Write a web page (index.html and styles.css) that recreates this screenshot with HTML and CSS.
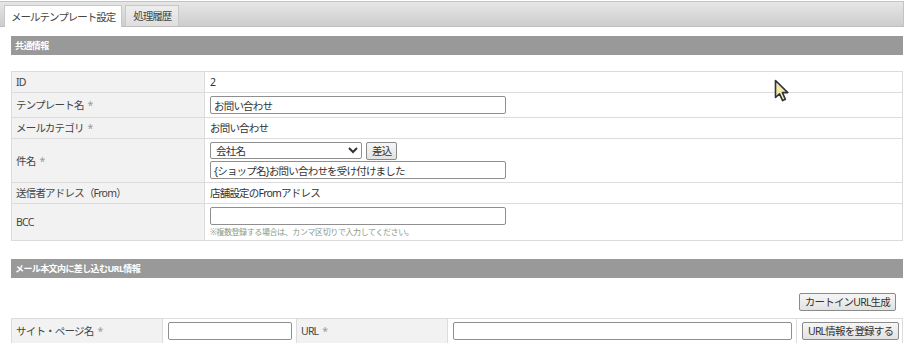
FILE: index.html
```html
<!DOCTYPE html>
<html lang="ja">
  <head>
    <meta charset="UTF-8" />
    <title>メールテンプレート設定</title>
    <link rel="stylesheet" href="styles.css">
  </head>
  <body>
    <!-- Tabs -->
    <div class="tabs">
      <div class="tab active">メールテンプレート設定</div>
      <div class="tab">処理履歴</div>
    </div>

    <div class="content">
      <h2 class="section-title">共通情報</h2>

      <table class="form-table">
        <tr>
          <th>ID</th>
          <td>2</td>
        </tr>
        <tr>
          <th>テンプレート名<span class="req">*</span></th>
          <td><input type="text" class="text-wide" value="お問い合わせ" /></td>
        </tr>
        <tr>
          <th>メールカテゴリ<span class="req">*</span></th>
          <td>お問い合わせ</td>
        </tr>
        <tr>
          <th>件名<span class="req">*</span></th>
          <td>
            <div class="insert-row">
              <select class="insert-select">
                <option>会社名</option>
              </select>
              <button class="btn">差込</button>
            </div>
            <input type="text" class="text-wide" value="{ショップ名}お問い合わせを受け付けました" />
          </td>
        </tr>
        <tr>
          <th>送信者アドレス（From）</th>
          <td>店舗設定のFromアドレス</td>
        </tr>
        <tr>
          <th>BCC</th>
          <td>
            <input type="text" class="text-wide" />
            <p class="note">※複数登録する場合は、カンマ区切りで入力してください。</p>
          </td>
        </tr>
      </table>

      <h2 class="section-title second">メール本文内に差し込むURL情報</h2>

      <div class="actions">
        <button class="btn">カートインURL生成</button>
      </div>

      <table class="form-table url-table">
        <tr>
          <th class="col-site">サイト・ページ名<span class="req">*</span></th>
          <td class="col-site-val"><input type="text" class="text-full" /></td>
          <th class="col-url">URL<span class="req">*</span></th>
          <td class="col-url-val"><input type="text" class="text-full" /></td>
          <td class="col-btn"><button class="btn">URL情報を登録する</button></td>
        </tr>
      </table>
    </div>

    <!-- mouse pointer -->
    <svg class="pointer" width="18" height="24" viewBox="0 0 18 24">
      <path d="M1.5 1.5 L1.5 18.5 L5.5 14.8 L8.6 21.6 L11.4 20.3 L8.4 13.6 L13.8 13.6 Z" fill="#f4eaa6" stroke="#2e3440" stroke-width="1.6" stroke-linejoin="round" />
    </svg>
  </body>
</html>
```

FILE: styles.css
```css
body {
  margin: 0;
  font-family: "Noto Sans", "Noto Sans CJK JP", sans-serif;
  font-size: 10.5px;
  letter-spacing: -0.8px;
  color: #333;
  background: #fff;
  position: relative;
  width: 904px;
  height: 343px;
  overflow: hidden;
}
.tabs {
  display: flex;
  gap: 3px;
  margin-top: 1px;
  padding: 3px 0 0 4px;
  width: 904px;
  height: 26px;
  border-top: 1px solid #c4c4c4;
  border-bottom: 1px solid #bdbdbd;
  border-right: 1px solid #c4c4c4;
  background: linear-gradient(#e6e6e6, #cdcdcd);
  box-sizing: border-box;
}
.tab {
  padding: 0 7px;
  line-height: 21px;
  border: 1px solid #c8c8c8;
  border-bottom: none;
  background: linear-gradient(#eeeeee, #dedede);
  color: #444;
  letter-spacing: -1px;
}
.tab.active {
  background: #fff;
  margin-bottom: -1px;
  line-height: 22px;
  padding: 0 6px;
}
.content {
  margin-left: 11px;
  width: 892px;
}
.section-title {
  margin: 9px 0 16px;
  height: 19px;
  line-height: 19px;
  padding: 0 4px;
  background: #999;
  color: #fff;
  font-size: 9px;
  font-weight: bold;
  letter-spacing: -0.6px;
}
.section-title.second {
  margin-top: 18px;
  margin-bottom: 15px;
}
.form-table {
  width: 100%;
  border-collapse: collapse;
  table-layout: fixed;
}
.form-table th,
.form-table td {
  border: 1px solid #dcdcdc;
  padding: 3px 4px;
  line-height: 14px;
  text-align: left;
  font-weight: normal;
  vertical-align: middle;
  white-space: nowrap;
}
.form-table th {
  width: 184px;
  background: #f2f2f2;
  color: #444;
}
.form-table td {
  padding-left: 5px;
}
.req {
  color: #999;
  margin-left: 4px;
}
input[type="text"],
select {
  font-family: inherit;
  font-size: 10.5px;
  letter-spacing: -0.8px;
  color: #333;
  height: 18px;
  border: 1px solid #8f8f8f;
  border-radius: 2px;
  padding: 0 3px;
  box-sizing: border-box;
  display: block;
  margin: 0;
}
.text-wide {
  width: 296px;
}
.text-full {
  width: 100%;
}
.insert-row {
  display: flex;
  gap: 4px;
  margin-bottom: 1px;
}
.insert-select {
  width: 152px;
  height: 17px;
  padding: 0 1px;
  background: #fff;
}
.btn {
  font-family: inherit;
  font-size: 10.5px;
  letter-spacing: -0.8px;
  color: #333;
  height: 18px;
  line-height: 14px;
  padding: 0 5px;
  border: 1px solid #8a8a8a;
  border-radius: 2px;
  background: linear-gradient(#f6f6f6, #e2e2e2);
  cursor: pointer;
  white-space: nowrap;
}
.note {
  margin: 2px 0 0;
  font-size: 8px;
  line-height: 10px;
  letter-spacing: -0.4px;
  color: #8a9a86;
}
.actions {
  display: flex;
  justify-content: flex-end;
  padding-right: 7px;
  margin-bottom: 7px;
}
.url-table th.col-site {
  width: 142px;
}
.url-table .col-site-val {
  width: 124px;
}
.url-table th.col-url {
  width: 142px;
}
.url-table .col-url-val {
  width: 339px;
}
.url-table .col-btn {
  padding-right: 6px;
}
.pointer {
  position: absolute;
  left: 774px;
  top: 79px;
}
```
